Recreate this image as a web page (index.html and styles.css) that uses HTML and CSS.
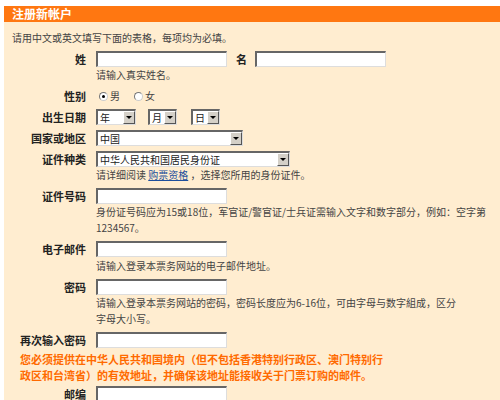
FILE: index.html
```html
<!DOCTYPE html>
<html>
<head>
  <title>注册新帐户</title>
  <meta charset="UTF-8">
  <link rel="stylesheet" href="styles.css">
</head>
<body>
  <div class="page">
    <h2 class="title">注册新帐户</h2>
    <p class="intro">请用中文或英文填写下面的表格，每项均为必填。</p>

    <div class="rows">
      <div class="row">
        <label class="label">姓</label>
        <div class="field">
          <div class="line">
            <input type="text" class="text">
            <label class="label inline">名</label>
            <input type="text" class="text">
          </div>
          <div class="hint">请输入真实姓名。</div>
        </div>
      </div>

      <div class="row">
        <label class="label">性别</label>
        <div class="field">
          <div class="line radios">
            <label class="radio"><input type="radio" name="sex" checked>男</label>
            <label class="radio"><input type="radio" name="sex">女</label>
          </div>
        </div>
      </div>

      <div class="row">
        <label class="label">出生日期</label>
        <div class="field">
          <div class="line dates">
            <span class="select sel-year"><span class="sel-text">年</span><span class="sel-btn"></span></span>
            <span class="select sel-day"><span class="sel-text">月</span><span class="sel-btn"></span></span>
            <span class="select sel-day"><span class="sel-text">日</span><span class="sel-btn"></span></span>
          </div>
        </div>
      </div>

      <div class="row">
        <label class="label">国家或地区</label>
        <div class="field">
          <div class="line">
            <span class="select sel-country"><span class="sel-text">中国</span><span class="sel-btn"></span></span>
          </div>
        </div>
      </div>

      <div class="row">
        <label class="label">证件种类</label>
        <div class="field">
          <div class="line">
            <span class="select sel-id"><span class="sel-text">中华人民共和国居民身份证</span><span class="sel-btn"></span></span>
          </div>
          <div class="hint">请详细阅读 <a href="#">购票资格</a> ，选择您所用的身份证件。</div>
        </div>
      </div>

      <div class="row">
        <label class="label">证件号码</label>
        <div class="field">
          <div class="line"><input type="text" class="text"></div>
          <div class="hint">身份证号码应为15或18位，军官证/警官证/士兵证需输入文字和数字部分，例如：空字第<br>1234567。</div>
        </div>
      </div>

      <div class="row">
        <label class="label">电子邮件</label>
        <div class="field">
          <div class="line"><input type="text" class="text"></div>
          <div class="hint spaced">请输入登录本票务网站的电子邮件地址。</div>
        </div>
      </div>

      <div class="row">
        <label class="label">密码</label>
        <div class="field">
          <div class="line"><input type="password" class="text"></div>
          <div class="hint">请输入登录本票务网站的密码，密码长度应为6-16位，可由字母与数字組成，区分<br>字母大小写。</div>
        </div>
      </div>

      <div class="row">
        <label class="label">再次输入密码</label>
        <div class="field">
          <div class="line"><input type="password" class="text"></div>
        </div>
      </div>

      <p class="warning">您必须提供在中华人民共和国境内（但不包括香港特别行政区、澳门特别行<br>政区和台湾省）的有效地址，并确保该地址能接收关于门票订购的邮件。</p>

      <div class="row">
        <label class="label">邮编</label>
        <div class="field">
          <div class="line"><input type="text" class="text"></div>
        </div>
      </div>
    </div>
  </div>
</body>
</html>
```

FILE: styles.css
```css
/* Reset */
* {
  margin: 0;
  padding: 0;
  box-sizing: border-box;
}

html, body {
  height: 100%;
  overflow: hidden;
}

body {
  background-color: #fff;
  font-family: "Noto Sans CJK SC", "DejaVu Sans", sans-serif;
  font-size: 10px;
  line-height: 16px;
  color: #444;
}

/* Page */
.page {
  margin: 6px 0 0 4px;
  min-height: 400px;
  background-color: #ffedd0;
}

.title {
  height: 16px;
  padding-left: 8px;
  background-color: #ff7711;
  color: #fff;
  font-size: 12px;
  font-weight: 700;
  line-height: 16px;
}

.intro {
  padding: 8px 0 0 8px;
  margin-bottom: 3px;
}

/* Form rows */
.rows {
  display: flex;
  flex-direction: column;
  gap: 1px;
}

.row {
  display: grid;
  grid-template-columns: 84px 1fr;
  column-gap: 8px;
  padding: 2px 0;
}

.label {
  padding-right: 2px;
  text-align: right;
  font-size: 11px;
  font-weight: 700;
  color: #222;
}

.label.inline {
  padding: 0;
  margin: 0 8px 0 9px;
}

.line {
  display: flex;
  align-items: center;
  height: 16px;
}

.hint.spaced {
  margin-top: 1px;
}

.hint a {
  color: #1d4f9c;
}

/* Controls */
input.text {
  width: 131px;
  height: 16px;
  background: #fff;
  border-top: 2px solid #666;
  border-left: 2px solid #666;
  border-right: 1px solid #ddd;
  border-bottom: 1px solid #ddd;
  outline: none;
}

.radios {
  padding-left: 3px;
  gap: 14px;
}

.radio {
  display: flex;
  align-items: center;
  gap: 2px;
}

.radio input {
  appearance: none;
  width: 9px;
  height: 9px;
  border-radius: 50%;
  border: 1px solid #777;
  border-right-color: #ccc;
  border-bottom-color: #ccc;
  background: #fff;
  position: relative;
}

.radio input:checked::after {
  content: "";
  position: absolute;
  left: 2px;
  top: 2px;
  width: 3px;
  height: 3px;
  border-radius: 50%;
  background: #000;
}

.dates {
  gap: 12px;
}

.dates .sel-day + .sel-day {
  margin-left: 2px;
}

.select {
  display: inline-flex;
  height: 16px;
  background: #fff;
  border-top: 2px solid #666;
  border-left: 2px solid #666;
  border-right: 1px solid #ddd;
  border-bottom: 1px solid #ddd;
}

.sel-text {
  flex: 1;
  padding-left: 2px;
  line-height: 13px;
  color: #222;
  white-space: nowrap;
  overflow: hidden;
}

.sel-btn {
  position: relative;
  width: 12px;
  height: 13px;
  background: #d4d0c8;
  border-top: 1px solid #fff;
  border-left: 1px solid #fff;
  border-right: 1px solid #555;
  border-bottom: 1px solid #555;
}

.sel-btn::after {
  content: "";
  position: absolute;
  left: 2px;
  top: 4px;
  border-left: 3px solid transparent;
  border-right: 3px solid transparent;
  border-top: 3px solid #000;
}

.sel-year {
  width: 40px;
}

.sel-day {
  width: 29px;
}

.sel-country {
  width: 147px;
}

.sel-id {
  width: 194px;
}

.warning {
  padding: 0 0 0 16px;
  font-size: 11px;
  font-weight: 700;
  color: #ff6a00;
}
```
